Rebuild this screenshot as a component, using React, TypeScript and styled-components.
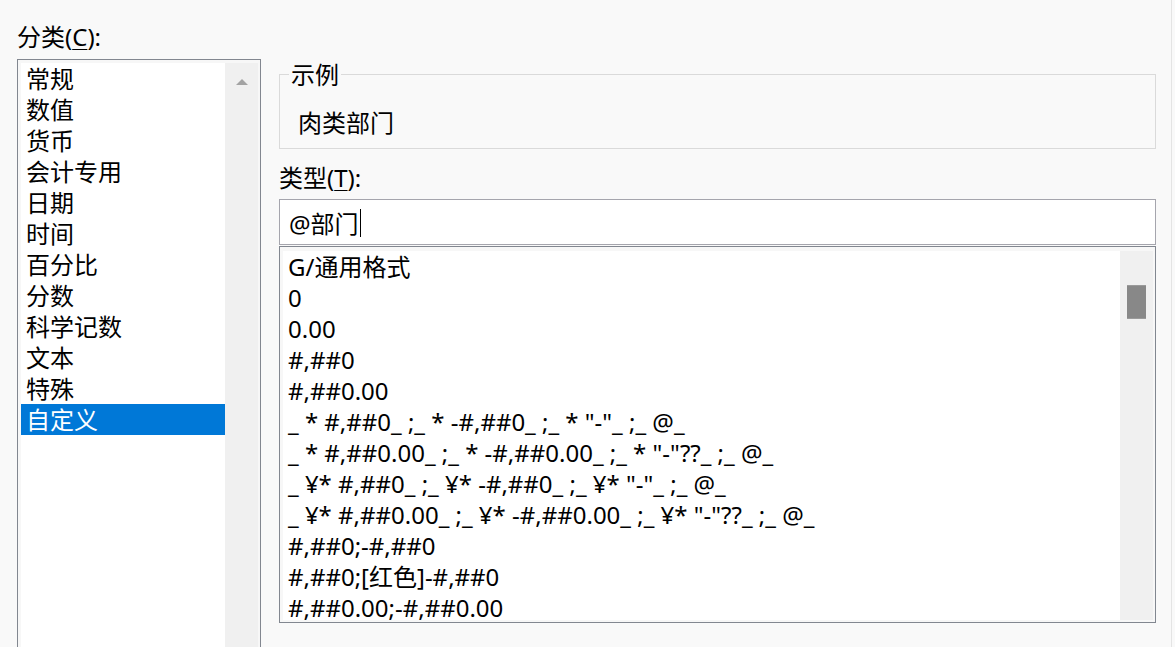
import React from "react";
import styled, { createGlobalStyle } from "styled-components";

const GlobalStyle = createGlobalStyle`
  html, body { margin: 0; padding: 0; background: #f9f9f9; }
  body {
    font-family: "Noto Sans", "Noto Sans CJK SC", sans-serif;
    color: #000;
  }
  * { box-sizing: border-box; }
`;

const Page = styled.div`
  display: flex;
  height: 647px;
  overflow: hidden;
  padding-left: 17px;
  font-size: 24px;
`;

const LeftColumn = styled.div`
  width: 244px;
  display: flex;
  flex-direction: column;
`;

const FieldLabel = styled.div<{ $height?: number }>`
  height: ${(p) => (p.$height ? `${p.$height}px` : "auto")};
  display: flex;
  align-items: flex-end;
  line-height: 31px;
  padding-bottom: 7px;
  white-space: nowrap;
  u {
    text-decoration: underline;
    text-underline-offset: 3px;
    text-decoration-thickness: 1px;
  }
`;

const ListFrame = styled.div`
  flex: 1;
  display: flex;
  border: 1px solid #828790;
  border-bottom: none;
  padding: 3px 2px 0 3px;
  background: #f7f7f7;
`;

const ListItems = styled.div`
  flex: 1;
  background: #fff;
`;

const CategoryRow = styled.div<{ $selected?: boolean }>`
  height: 31px;
  line-height: 31px;
  padding-left: 5px;
  white-space: nowrap;
  background: ${(p) => (p.$selected ? "#0078d7" : "transparent")};
  color: ${(p) => (p.$selected ? "#fff" : "#000")};
`;

const ScrollTrack = styled.div<{ $width: number }>`
  width: ${(p) => p.$width}px;
  background: #f0f0f0;
  display: flex;
  flex-direction: column;
  align-items: center;
`;

const ArrowUp = styled.div`
  margin-top: 16px;
  width: 0;
  height: 0;
  border-left: 6px solid transparent;
  border-right: 6px solid transparent;
  border-bottom: 6px solid #a3a3a3;
`;

const Thumb = styled.div`
  margin-top: 34px;
  width: 19px;
  height: 34px;
  background: #888888;
  border-top: 1px solid #9a9a9a;
  border-bottom: 1px solid #9a9a9a;
`;

const RightColumn = styled.div`
  width: 877px;
  margin-left: 18px;
  display: flex;
  flex-direction: column;
`;

const SampleBox = styled.fieldset`
  margin: 62px 0 0 0;
  border: 1px solid #dadada;
  padding: 0 0 10px 9px;
  min-width: 0;
`;

const SampleLegend = styled.legend`
  padding: 0 2px;
  line-height: 25px;
`;

const SampleText = styled.div`
  margin-top: 20px;
  padding-left: 9px;
  line-height: 31px;
`;

const TypeLabel = styled.div`
  margin-top: 13px;
  line-height: 31px;
  u {
    text-decoration: underline;
    text-underline-offset: 3px;
    text-decoration-thickness: 1px;
  }
`;

const Input = styled.div`
  margin-top: 6px;
  height: 46px;
  border: 1px solid #a5a5ad;
  background: #fff;
  display: flex;
  align-items: center;
  padding: 2px 0 0 9px;
  line-height: 31px;
`;

const Caret = styled.span`
  display: inline-block;
  width: 1px;
  height: 28px;
  background: #000;
  margin-left: 1px;
`;

const FormatFrame = styled.div`
  margin-top: 1px;
  height: 377px;
  border: 1px solid #828790;
  background: #f7f7f7;
  padding: 4px 2px 2px 3px;
  display: flex;
`;

const FormatItems = styled.div`
  flex: 1;
  background: #fff;
`;

const FormatRow = styled.div`
  height: 31px;
  line-height: 31px;
  padding-left: 5px;
  white-space: pre;
`;

const LastFormatRow = styled(FormatRow)`
  height: 26px;
  line-height: 31px;
  overflow: visible;
`;

const EdgeLine = styled.div`
  margin-left: 15px;
  width: 1px;
  background: #e4e4e4;
`;

const categories = [
  "常规",
  "数值",
  "货币",
  "会计专用",
  "日期",
  "时间",
  "百分比",
  "分数",
  "科学记数",
  "文本",
  "特殊",
  "自定义",
];

const formats = [
  "G/通用格式",
  "0",
  "0.00",
  "#,##0",
  "#,##0.00",
  '_ * #,##0_ ;_ * -#,##0_ ;_ * "-"_ ;_ @_',
  '_ * #,##0.00_ ;_ * -#,##0.00_ ;_ * "-"??_ ;_ @_',
  '_ ¥* #,##0_ ;_ ¥* -#,##0_ ;_ ¥* "-"_ ;_ @_',
  '_ ¥* #,##0.00_ ;_ ¥* -#,##0.00_ ;_ ¥* "-"??_ ;_ @_',
  "#,##0;-#,##0",
  "#,##0;[红色]-#,##0",
];

export default function App() {
  return (
    <>
      <GlobalStyle />
      <Page>
        <LeftColumn>
          <FieldLabel $height={59}>
            分类(<u>C</u>):
          </FieldLabel>
          <ListFrame>
            <ListItems>
              {categories.map((c) => (
                <CategoryRow key={c} $selected={c === "自定义"}>
                  {c}
                </CategoryRow>
              ))}
            </ListItems>
            <ScrollTrack $width={33}>
              <ArrowUp />
            </ScrollTrack>
          </ListFrame>
        </LeftColumn>
        <RightColumn>
          <SampleBox>
            <SampleLegend>示例</SampleLegend>
            <SampleText>肉类部门</SampleText>
          </SampleBox>
          <TypeLabel>
            类型(<u>T</u>):
          </TypeLabel>
          <Input>
            @部门
            <Caret />
          </Input>
          <FormatFrame>
            <FormatItems>
              {formats.map((f, i) => (
                <FormatRow key={i}>{f}</FormatRow>
              ))}
              <LastFormatRow>#,##0.00;-#,##0.00</LastFormatRow>
            </FormatItems>
            <ScrollTrack $width={33}>
              <Thumb />
            </ScrollTrack>
          </FormatFrame>
        </RightColumn>
        <EdgeLine />
      </Page>
    </>
  );
}
